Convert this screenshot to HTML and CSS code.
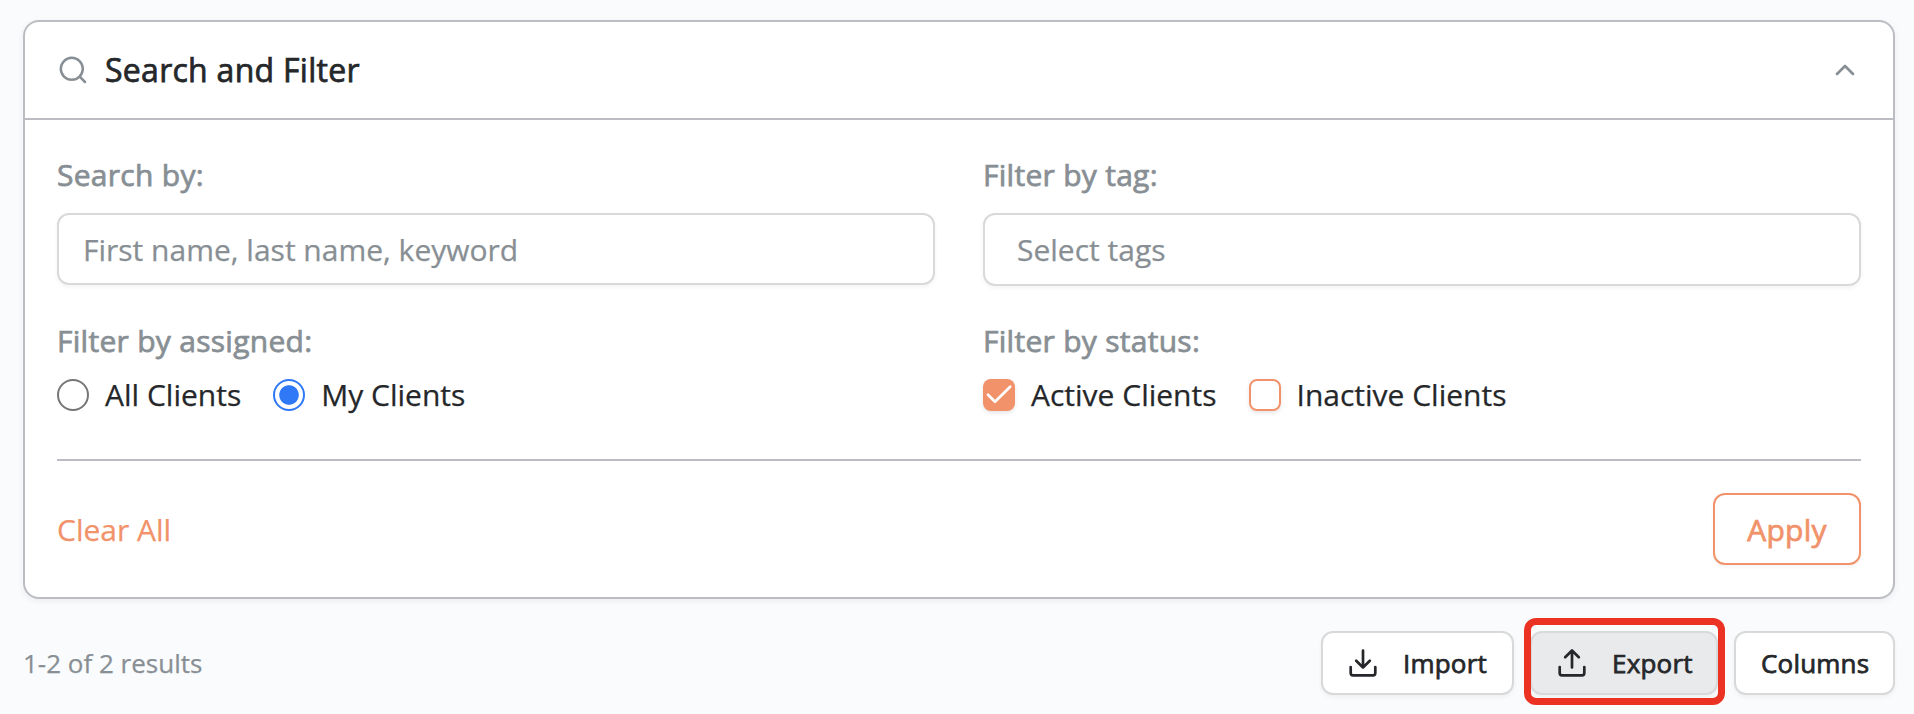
FILE: index.html
```html
<!DOCTYPE html>
<html lang="en">
<head>
<meta charset="utf-8">
<title>Clients</title>
<link rel="stylesheet" href="styles.css">
</head>
<body>
<section class="card">
  <header class="card-header">
    <svg class="icon-search" width="32" height="32" viewBox="0 0 32 32"><circle cx="14.800" cy="14.800" r="11"/><path d="M22.700 22.700l5.300 5.300"/></svg>
    <h2 class="card-title">Search and Filter</h2>
    <svg class="icon-chevron" width="24" height="24" viewBox="0 0 24 24"><path d="M4 16l8-8 8 8"/></svg>
  </header>
  <div class="card-body">
    <div class="grid">
      <div class="field">
        <div class="label">Search by:</div>
        <div class="input"><span>First name, last name, keyword</span></div>
      </div>
      <div class="field">
        <div class="label">Filter by tag:</div>
        <div class="input input-tags"><span>Select tags</span></div>
      </div>
      <div class="field">
        <div class="label">Filter by assigned:</div>
        <div class="options">
          <label class="option"><i class="radio"></i><span>All Clients</span></label>
          <label class="option"><i class="radio radio-on"></i><span>My Clients</span></label>
        </div>
      </div>
      <div class="field">
        <div class="label">Filter by status:</div>
        <div class="options">
          <label class="option"><i class="check check-on"><svg width="32" height="32" viewBox="0 0 32 32"><path d="M5 15.800l7 7L27.200 7.800"/></svg></i><span>Active Clients</span></label>
          <label class="option"><i class="check"></i><span>Inactive Clients</span></label>
        </div>
      </div>
    </div>
    <footer class="actions">
      <a class="clear">Clear All</a>
      <button class="apply">Apply</button>
    </footer>
  </div>
</section>
<div class="toolbar">
  <span class="results">1-2 of 2 results</span>
  <div class="buttons">
    <button class="btn btn-import"><svg width="32" height="32" viewBox="0 0 32 32"><path d="M16 3.500v17M9.200 13.700l6.800 6.800 6.800-6.800M3.700 20v6a2.300 2.300 0 0 0 2.300 2.300h20a2.300 2.300 0 0 0 2.300-2.300v-6"/></svg><span>Import</span></button>
    <button class="btn btn-export"><svg width="32" height="32" viewBox="0 0 32 32"><path d="M16 20.500v-17M9.200 10.300l6.800-6.800 6.800 6.800M3.700 20v6a2.300 2.300 0 0 0 2.300 2.300h20a2.300 2.300 0 0 0 2.300-2.300v-6"/></svg><span>Export</span></button>
    <button class="btn btn-columns"><span>Columns</span></button>
  </div>
</div>
</body>
</html>
```
FILE: styles.css
```css
* { box-sizing: border-box; }
body {
  margin: 0;
  padding: 20px 19px 0 23px;
  height: 714px;
  overflow: hidden;
  background: #fafbfd;
  color: #25272a;
  font-family: "Open Sans", "Noto Sans", sans-serif;
  font-size: 30px;
  line-height: 48px;
  white-space: nowrap;
  -webkit-text-stroke: 0.25px currentColor;
}
button { font: inherit; color: inherit; padding: 0; margin: 0; }
svg { fill: none; stroke: currentColor; stroke-linecap: round; stroke-linejoin: round; flex: none; display: block; }

/* medium weight: regular glyphs thickened and slightly tracked out */
.card-title, .label, .apply, .btn {
  font-weight: 500;
  letter-spacing: 0.28px;
  -webkit-text-stroke: 0.75px currentColor;
}

.card {
  height: 579px;
  border: 2px solid #bcbdc2;
  border-radius: 16px;
  background: #fff;
  box-shadow: 0 2px 6px rgba(30, 40, 60, 0.07);
}
.card-header {
  display: flex;
  align-items: center;
  height: 98px;
  padding: 0 36px 0 32px;
  border-bottom: 2px solid #bcbdc2;
}
.icon-search { color: #888f94; stroke-width: 2.500; }
.card-title { flex: 1; margin: 0 0 0 16px; font-size: 32px; }
.icon-chevron { color: #888f94; stroke-width: 2.700; }

.card-body { padding: 31px 32px 0; }
.grid {
  display: grid;
  grid-template-columns: 878px 878px;
  grid-template-rows: 166px 142px;
  column-gap: 48px;
}
.label { color: #888f94; }
.input {
  display: flex;
  align-items: center;
  height: 72px;
  margin-top: 14px;
  padding: 1px 24px 0;
  border: 2px solid #d8d9da;
  border-radius: 12px;
  color: #888f94;
  box-shadow: 0 2px 4px rgba(0, 0, 0, 0.05);
}
.input-tags { height: 73px; padding: 0 32px; }
.options { display: flex; gap: 32px; margin-top: 6px; }
.option { display: flex; align-items: center; gap: 16px; }
.radio {
  width: 32px;
  height: 32px;
  border: 2px solid #767676;
  border-radius: 50%;
}
.radio-on { border-color: #2f78f6; background: radial-gradient(circle, #2f78f6 9.300px, #fff 10.200px); }
.check {
  width: 32px;
  height: 32px;
  border: 2px solid #f1926a;
  border-radius: 8px;
  box-shadow: 0 2px 4px rgba(0, 0, 0, 0.1);
}
.check-on { border: 0; background: #f1926a; color: #fff; }
.check-on svg { stroke-width: 2.700; }

.actions {
  display: flex;
  align-items: center;
  justify-content: space-between;
  padding-top: 32px;
  border-top: 2px solid #bcbdc2;
}
.clear { color: #f1926a; padding-top: 1px; }
.apply {
  width: 148px;
  height: 72px;
  padding-top: 1px;
  border: 2px solid #f1926a;
  border-radius: 12px;
  background: #fff;
  color: #f1926a;
  box-shadow: 0 2px 4px rgba(0, 0, 0, 0.05);
}

.toolbar {
  display: flex;
  align-items: center;
  justify-content: space-between;
  height: 64px;
  margin-top: 32px;
  font-size: 26px;
}
.results { color: #888f94; }
.buttons { display: flex; gap: 16px; }
.btn {
  display: flex;
  align-items: center;
  height: 64px;
  padding: 0 24px;
  border: 2px solid #d8d9da;
  border-radius: 12px;
  background: #fff;
  letter-spacing: 0.2px;
  box-shadow: 0 2px 4px rgba(0, 0, 0, 0.05);
}
.btn svg { stroke-width: 2.700; margin-right: 24px; }
.btn-import { width: 193px; }
.btn-export {
  position: relative;
  width: 188px;
  background: #e9eaec;
}
/* highlight ring around the export action */
.btn-export::after {
  content: "";
  position: absolute;
  inset: -15px -9px -12px -8px;
  border: 7px solid #ec3323;
  border-radius: 12px;
}
.btn-columns { width: 161px; padding-left: 25px; }
```
